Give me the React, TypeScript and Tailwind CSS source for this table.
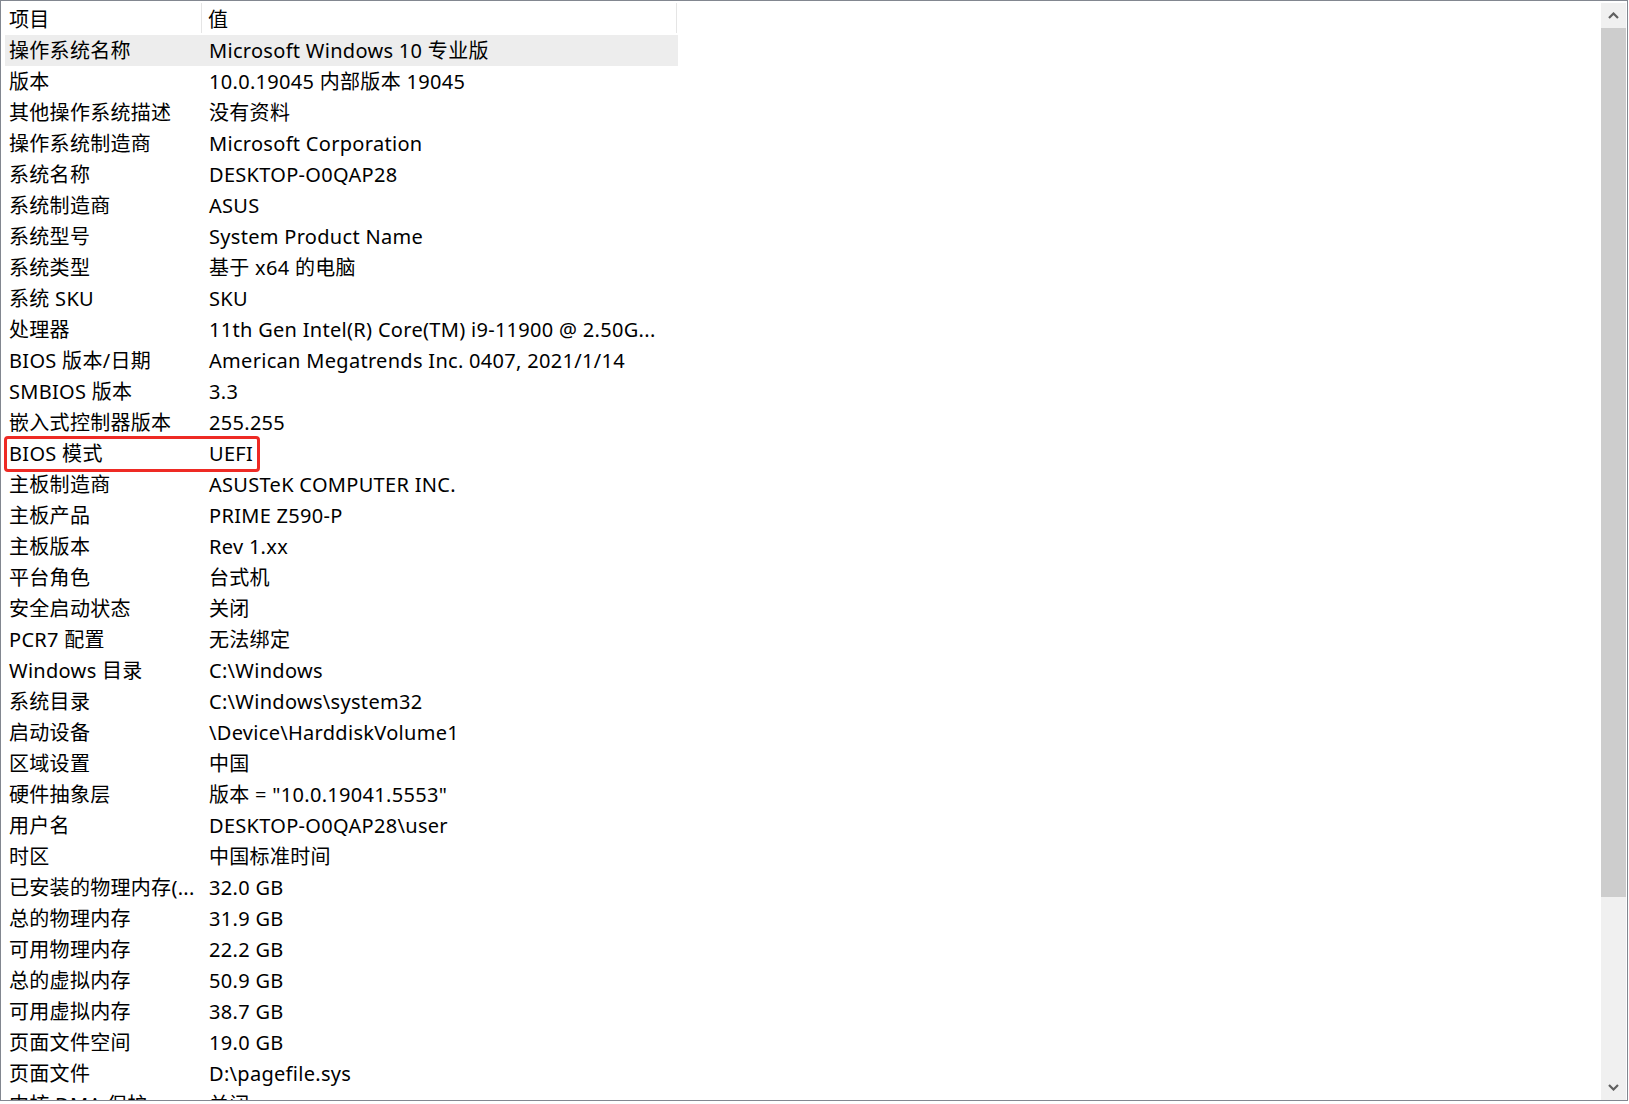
import React from "react";

const rows: [string, string][] = [
  ["操作系统名称", "Microsoft Windows 10 专业版"],
  ["版本", "10.0.19045 内部版本 19045"],
  ["其他操作系统描述", "没有资料"],
  ["操作系统制造商", "Microsoft Corporation"],
  ["系统名称", "DESKTOP-O0QAP28"],
  ["系统制造商", "ASUS"],
  ["系统型号", "System Product Name"],
  ["系统类型", "基于 x64 的电脑"],
  ["系统 SKU", "SKU"],
  ["处理器", "11th Gen Intel(R) Core(TM) i9-11900 @ 2.50G..."],
  ["BIOS 版本/日期", "American Megatrends Inc. 0407, 2021/1/14"],
  ["SMBIOS 版本", "3.3"],
  ["嵌入式控制器版本", "255.255"],
  ["BIOS 模式", "UEFI"],
  ["主板制造商", "ASUSTeK COMPUTER INC."],
  ["主板产品", "PRIME Z590-P"],
  ["主板版本", "Rev 1.xx"],
  ["平台角色", "台式机"],
  ["安全启动状态", "关闭"],
  ["PCR7 配置", "无法绑定"],
  ["Windows 目录", "C:\\Windows"],
  ["系统目录", "C:\\Windows\\system32"],
  ["启动设备", "\\Device\\HarddiskVolume1"],
  ["区域设置", "中国"],
  ["硬件抽象层", "版本 = \"10.0.19041.5553\""],
  ["用户名", "DESKTOP-O0QAP28\\user"],
  ["时区", "中国标准时间"],
  ["已安装的物理内存(...", "32.0 GB"],
  ["总的物理内存", "31.9 GB"],
  ["可用物理内存", "22.2 GB"],
  ["总的虚拟内存", "50.9 GB"],
  ["可用虚拟内存", "38.7 GB"],
  ["页面文件空间", "19.0 GB"],
  ["页面文件", "D:\\pagefile.sys"],
  ["内核 DMA 保护", "关闭"],
];

function Chevron({ up }: { up: boolean }) {
  return (
    <svg width="11" height="7" viewBox="0 0 11 7">
      <path
        d={up ? "M1 6 L5.5 1.5 L10 6" : "M1 1 L5.5 5.5 L10 1"}
        fill="none"
        stroke="#606060"
        strokeWidth="2.2"
      />
    </svg>
  );
}

export default function App() {
  return (
    <div
      className="w-[1629px] h-[1104px] bg-white overflow-hidden"
      style={{ fontFamily: '"Noto Sans", "Noto Sans CJK SC", sans-serif' }}
    >
      <div className="w-[1628px] h-[1101px] border border-[#828790] flex overflow-hidden">
        <div className="flex-1 pl-[4px] overflow-hidden">
          <div className="w-[673px]">
            <div className="h-[34px] flex text-[20px] text-black leading-[30px] tracking-[0.3px]">
              <div className="w-[197px] flex items-center pl-[4px] pt-[3px] border-r border-[#e5e5e5] my-[2px]">项目</div>
              <div className="w-[475px] flex items-center pl-[6px] pt-[3px] border-r border-[#e5e5e5] my-[2px]">值</div>
            </div>
            {rows.map(([k, v], i) => (
              <div
                key={i}
                className={`relative h-[31px] flex items-center text-[20px] text-black leading-[30px] tracking-[0.3px] ${i === 0 ? "bg-[#ededed]" : ""}`}
              >
                <div className="w-[197px] pl-[4px] whitespace-nowrap overflow-hidden">{k}</div>
                <div className="w-[476px] pl-[7px] whitespace-nowrap overflow-hidden">{v}</div>
                {k === "BIOS 模式" && (
                  <div className="absolute left-[-1px] top-[-2px] w-[256px] h-[36px] border-[3px] border-[#ee2a24] rounded-[4px]" />
                )}
              </div>
            ))}
          </div>
        </div>
        <div className="w-[25px] mt-[2px] mr-[1px] flex flex-col bg-[#f0f0f0]">
          <div className="h-[25px] flex items-center justify-center">
            <Chevron up />
          </div>
          <div className="h-[869px] bg-[#cdcdcd]" />
          <div className="flex-1" />
          <div className="h-[25px] flex items-center justify-center">
            <Chevron up={false} />
          </div>
        </div>
      </div>
    </div>
  );
}
